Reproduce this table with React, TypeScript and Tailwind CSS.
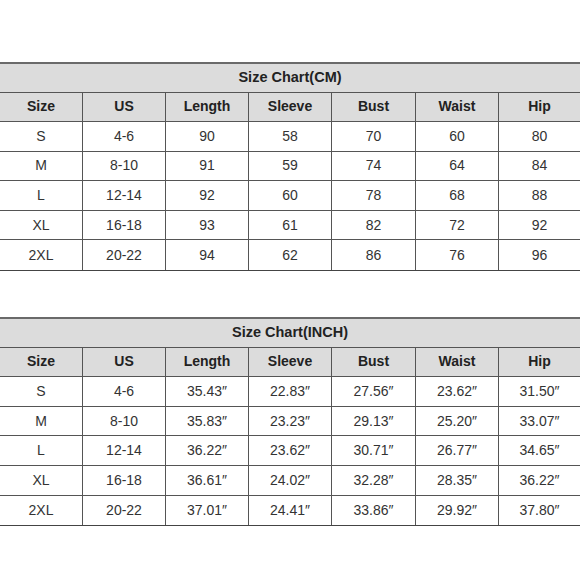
import React from "react";

const headers = ["Size", "US", "Length", "Sleeve", "Bust", "Waist", "Hip"];

const cm = [
  ["S", "4-6", "90", "58", "70", "60", "80"],
  ["M", "8-10", "91", "59", "74", "64", "84"],
  ["L", "12-14", "92", "60", "78", "68", "88"],
  ["XL", "16-18", "93", "61", "82", "72", "92"],
  ["2XL", "20-22", "94", "62", "86", "76", "96"],
];

const inch = [
  ["S", "4-6", "35.43″", "22.83″", "27.56″", "23.62″", "31.50″"],
  ["M", "8-10", "35.83″", "23.23″", "29.13″", "25.20″", "33.07″"],
  ["L", "12-14", "36.22″", "23.62″", "30.71″", "26.77″", "34.65″"],
  ["XL", "16-18", "36.61″", "24.02″", "32.28″", "28.35″", "36.22″"],
  ["2XL", "20-22", "37.01″", "24.41″", "33.86″", "29.92″", "37.80″"],
];

function Chart({ title, rows }: { title: string; rows: string[][] }) {
  return (
    <div className="w-[580px] border-t-2 border-b border-t-[#6a6a6a] border-b-[#444]">
      <div className="h-[28.5px] bg-[#dcdcdc] border-b border-[#555] flex items-center justify-center text-[14.5px] font-bold text-[#222]">
        {title}
      </div>
      <div className="grid grid-cols-[83px_83px_83px_83px_84px_83px_81px] h-[29.6px] bg-[#dcdcdc] border-b border-[#555]">
        {headers.map((h, i) => (
          <div
            key={h}
            className={
              "flex items-center justify-center text-[14px] font-bold text-[#222] " +
              (i < 6 ? "border-r border-[#555]" : "")
            }
          >
            {h}
          </div>
        ))}
      </div>
      {rows.map((r, ri) => (
        <div
          key={ri}
          className={
            "grid grid-cols-[83px_83px_83px_83px_84px_83px_81px] h-[29.6px] bg-white " +
            (ri < rows.length - 1 ? "border-b border-[#555]" : "")
          }
        >
          {r.map((c, ci) => (
            <div
              key={ci}
              className={
                "flex items-center justify-center text-[14px] text-[#333] " +
                (ci < 6 ? "border-r border-[#555]" : "")
              }
            >
              {c}
            </div>
          ))}
        </div>
      ))}
    </div>
  );
}

export default function App() {
  return (
    <div
      className="w-[580px] h-[580px] bg-white pt-[62px] flex flex-col gap-[46px]"
      style={{ fontFamily: '"Liberation Sans", Arial, sans-serif' }}
    >
      <Chart title="Size Chart(CM)" rows={cm} />
      <Chart title="Size Chart(INCH)" rows={inch} />
    </div>
  );
}
